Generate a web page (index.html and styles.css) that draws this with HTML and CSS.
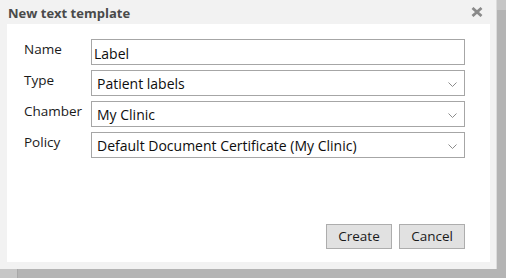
FILE: index.html
```html
<!DOCTYPE html>
<html>
<head>
<meta charset="utf-8">
<link rel="stylesheet" href="styles.css">
</head>
<body>
<div class="stage">
  <div class="dialog">
    <div class="titlebar">
      <span class="title">New text template</span>
      <span class="close">
        <svg width="12" height="10" viewBox="0 0 12 10"><path d="M1.5 1 L10.5 9 M10.5 1 L1.5 9" stroke="#8a8a8a" stroke-width="2.8" fill="none"/></svg>
      </span>
    </div>
    <div class="content">
      <div class="form">
        <label class="lbl">Name</label>
        <div class="field input">Label</div>
        <label class="lbl">Type</label>
        <div class="field select"><span>Patient labels</span><svg class="chev" width="9" height="5" viewBox="0 0 9 5"><path d="M0.5 0.5 L4.5 4.5 L8.5 0.5" stroke="#8c8c8c" stroke-width="1" fill="none"/></svg></div>
        <label class="lbl">Chamber</label>
        <div class="field select"><span>My Clinic</span><svg class="chev" width="9" height="5" viewBox="0 0 9 5"><path d="M0.5 0.5 L4.5 4.5 L8.5 0.5" stroke="#8c8c8c" stroke-width="1" fill="none"/></svg></div>
        <label class="lbl">Policy</label>
        <div class="field select"><span>Default Document Certificate (My Clinic)</span><svg class="chev" width="9" height="5" viewBox="0 0 9 5"><path d="M0.5 0.5 L4.5 4.5 L8.5 0.5" stroke="#8c8c8c" stroke-width="1" fill="none"/></svg></div>
      </div>
      <div class="actions">
        <button class="btn">Create</button>
        <button class="btn">Cancel</button>
      </div>
    </div>
  </div>
  <div class="shade-right"></div>
  <div class="shade-bottom"></div>
</div>
</body>
</html>
```

FILE: styles.css
```css
* { box-sizing: border-box; }
html, body { margin: 0; padding: 0; }
body {
  font-family: "Open Sans", "Noto Sans", sans-serif;
  background: #b4b4b4;
  width: 506px;
  height: 278px;
  overflow: hidden;
}
.stage {
  position: relative;
  width: 506px;
  height: 278px;
  background: #b4b4b4;
}
.dialog {
  width: 496px;
  height: 269px;
  background: #f2f2f2;
  display: flex;
  flex-direction: column;
  padding: 0 6px 7px 7px;
}
.titlebar {
  height: 24px;
  display: flex;
  align-items: center;
  justify-content: space-between;
  padding: 0 7px 0 1px;
}
.title {
  font-weight: bold;
  font-size: 13px;
  color: #4a4a4a;
  line-height: 24px;
  margin-top: 2px;
}
.close { display: flex; margin-top: -1px; }
.content {
  flex: 1;
  background: #fff;
  display: flex;
  flex-direction: column;
  justify-content: space-between;
  padding: 15px 25px 13px 17px;
}
.form {
  display: grid;
  grid-template-columns: 67px 1fr;
  grid-auto-rows: 26px;
  row-gap: 5px;
}
.lbl {
  font-size: 13.5px;
  color: #1a1a1a;
  line-height: 18px;
  padding-top: 1px;
}
.field {
  border: 1px solid #a6a6a6;
  font-size: 14px;
  color: #0d0d0d;
  display: flex;
  align-items: center;
  height: 26px;
}
.input { padding-left: 2px; padding-top: 2px; }
.select { padding-left: 5px; padding-right: 7px; justify-content: space-between; padding-top: 1px; }
.chev { margin-top: 1px; }
.actions {
  display: flex;
  justify-content: flex-end;
  gap: 7px;
}
.btn {
  width: 66px;
  height: 25px;
  background: #e1e1e1;
  border: 1px solid #adadad;
  font-family: "Open Sans", "Noto Sans", sans-serif;
  font-size: 13.5px;
  color: #1a1a1a;
  padding: 0;
  line-height: 21px;
}
.shade-right {
  position: absolute;
  left: 496px;
  top: 0;
  width: 10px;
  height: 269px;
  background: linear-gradient(#c6c6c6 0 10px, #b4b4b4 10px);
  border-left: 1px solid #dcdcdc;
}
.shade-bottom {
  position: absolute;
  left: 0;
  top: 269px;
  width: 18px;
  height: 9px;
  background: #c6c6c6;
  border-right: 1px solid #a8a8a8;
}
```
